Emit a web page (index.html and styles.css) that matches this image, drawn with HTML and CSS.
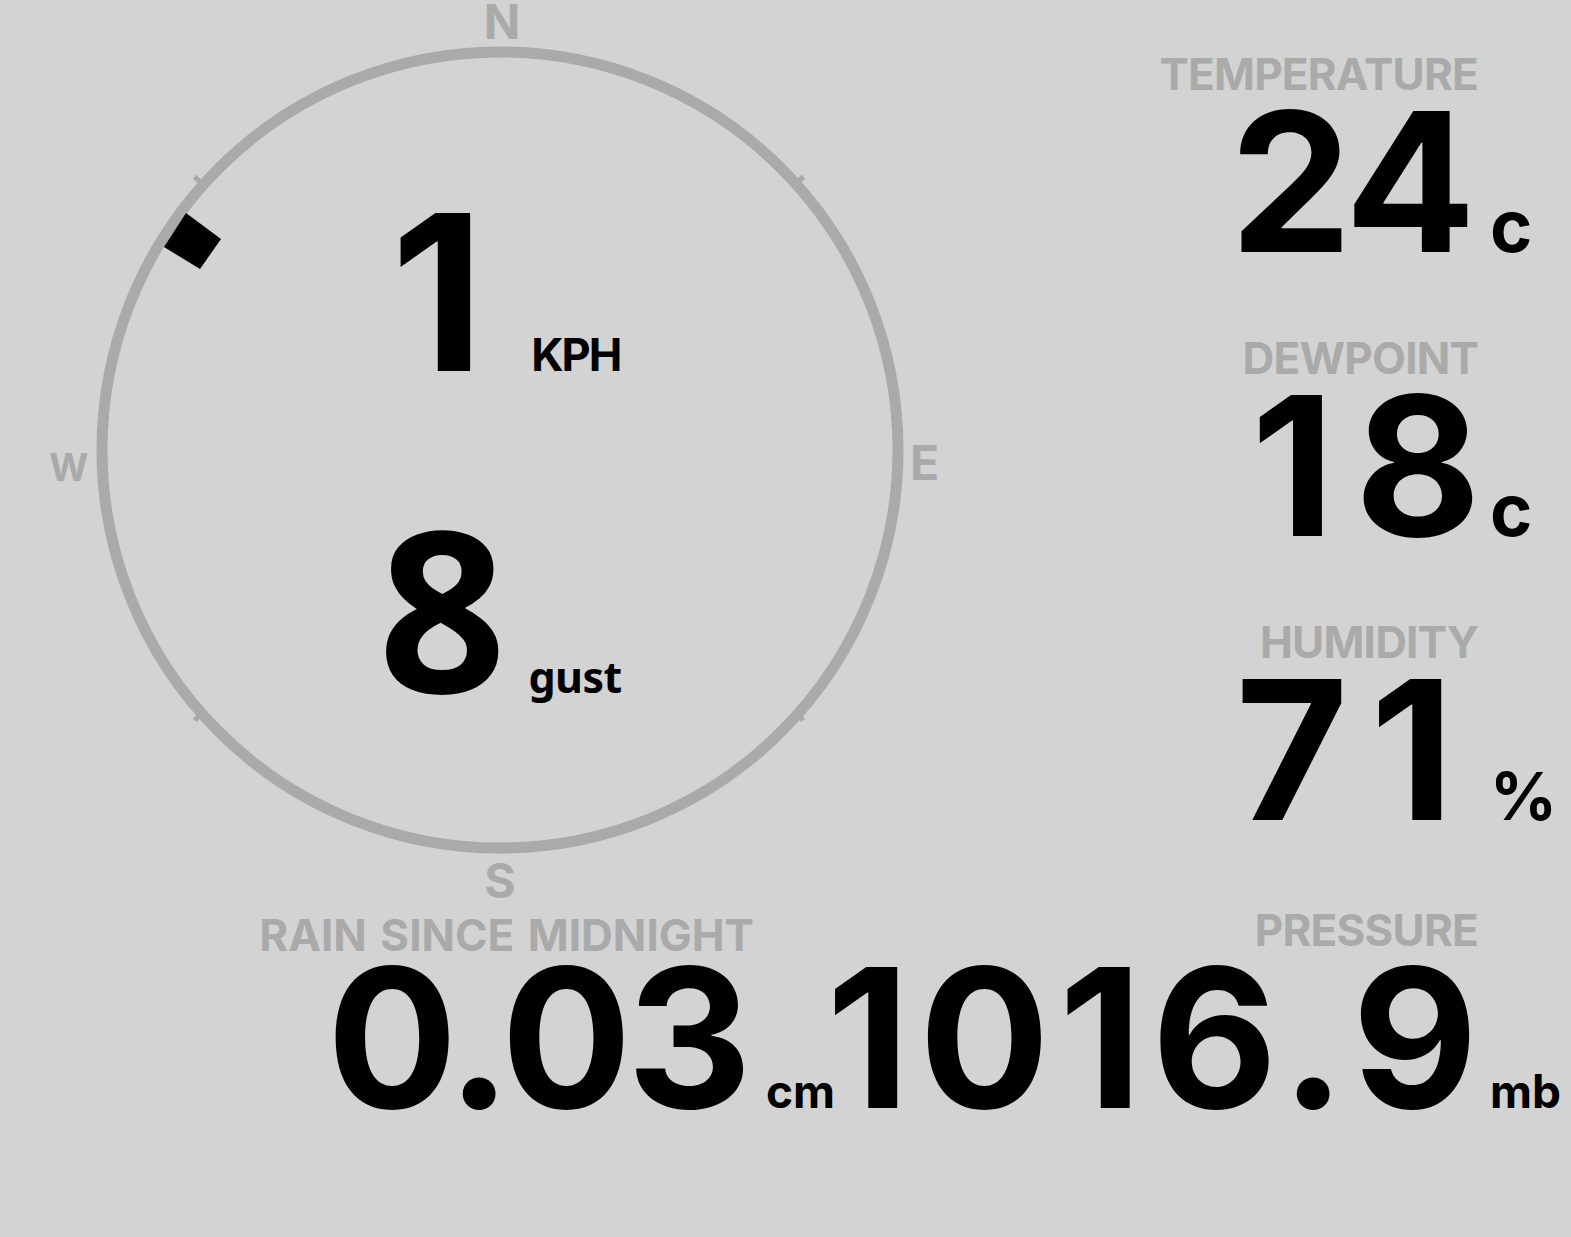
FILE: index.html
```html
<!DOCTYPE html>
<html lang="en">
<head>
<meta charset="utf-8">
<title>Weather</title>
<link rel="stylesheet" href="styles.css">
</head>
<body>
<main class="page">
  <section class="top">
    <div class="compass">
      <svg class="compass-ring" viewBox="0 0 1000 904" width="1000" height="904" aria-hidden="true">
        <circle cx="500" cy="450" r="398" fill="none" stroke="#aaaaaa" stroke-width="11"/>
        <g fill="#aaaaaa">
          <rect x="196" y="175" width="5" height="11" transform="rotate(-45 198.5 180.5)"/>
          <rect x="797" y="175" width="5" height="11" transform="rotate(45 799.5 180.5)"/>
          <rect x="196" y="711" width="5" height="11" transform="rotate(45 198.5 716.5)"/>
          <rect x="797" y="711" width="5" height="11" transform="rotate(-45 799.5 716.5)"/>
        </g>
        <polygon points="186,213 221,239 200,269 164,247" fill="#000000"/>
      </svg>
      <span class="cardinal cardinal-n">N</span>
      <span class="cardinal cardinal-e">E</span>
      <span class="cardinal cardinal-s">S</span>
      <span class="cardinal cardinal-w">W</span>
      <div class="speeds">
        <div class="speed-row wind-row">
          <span class="speed-num">1</span>
          <span class="speed-unit">KPH</span>
        </div>
        <div class="speed-row gust-row">
          <span class="gust-num">8</span>
          <span class="gust-unit">gust</span>
        </div>
      </div>
    </div>
    <div class="stats">
      <div class="stat stat-right">
        <div class="stat-label">TEMPERATURE</div>
        <div class="stat-num num-temp">24</div>
        <div class="stat-unit unit-c">c</div>
      </div>
      <div class="stat stat-right">
        <div class="stat-label">DEWPOINT</div>
        <div class="stat-num num-dew">18</div>
        <div class="stat-unit unit-c">c</div>
      </div>
      <div class="stat stat-right">
        <div class="stat-label">HUMIDITY</div>
        <div class="stat-num num-hum">71</div>
        <div class="stat-unit unit-pct">%</div>
      </div>
    </div>
  </section>
  <section class="bottom">
    <div class="stat stat-rain">
      <div class="stat-label label-rain">RAIN SINCE MIDNIGHT</div>
      <div class="stat-num num-rain">0.03</div>
      <div class="stat-unit unit-small">cm</div>
    </div>
    <div class="stat stat-pressure">
      <div class="stat-label">PRESSURE</div>
      <div class="stat-num num-pressure">1016.9</div>
      <div class="stat-unit unit-small">mb</div>
    </div>
  </section>
</main>
</body>
</html>
```
FILE: styles.css
```css
html, body {
  margin: 0;
  padding: 0;
  background: #d3d3d3;
}

.page {
  width: 1571px;
  height: 1237px;
  overflow: hidden;
  font-family: "Inter", "DejaVu Sans", sans-serif;
  font-weight: 700;
  color: #000;
}

.top {
  display: flex;
  height: 908px;
}

/* ---------- compass ---------- */
.compass {
  position: relative;
  width: 1000px;
  height: 908px;
  flex: none;
}

.compass-ring {
  position: absolute;
  left: 0;
  top: 0;
}

.cardinal {
  position: absolute;
  color: #aaaaaa;
  font-size: 48px;
  line-height: 44px;
}

.cardinal-n {
  left: 472px;
  width: 60px;
  text-align: center;
  top: 0;
}

.cardinal-s {
  left: 470px;
  width: 60px;
  text-align: center;
  top: 859px;
}

.cardinal-e {
  left: 910px;
  top: 441px;
}

.cardinal-w {
  left: 49px;
  top: 448px;
  font-size: 38px;
  line-height: 38px;
}

.speeds {
  position: relative;
  display: flex;
  flex-direction: column;
  align-items: center;
  padding-top: 207px;
  gap: 145px;
}

.speed-row {
  display: flex;
  align-items: baseline;
  justify-content: center;
  height: 170px;
}

.wind-row {
  padding-left: 26px;
  padding-right: 15px;
}

.speed-num {
  font-size: 217px;
  line-height: 170px;
}

.speed-unit {
  font-size: 45px;
  line-height: 40px;
  letter-spacing: -2px;
  margin-left: 47px;
}

.gust-row {
  font-family: "Noto Sans", "DejaVu Sans", sans-serif;
}

.gust-num {
  font-size: 224px;
  line-height: 170px;
}

.gust-unit {
  font-size: 43px;
  line-height: 40px;
  letter-spacing: -0.5px;
  margin-left: 22px;
}

/* ---------- stats ---------- */
.stats {
  flex: 1;
  display: flex;
  flex-direction: column;
  padding-top: 52px;
  gap: 79px;
}

.stat {
  display: grid;
  align-items: baseline;
}

.stat-right {
  grid-template-columns: 476px 95px;
}

.stat-label {
  grid-column: 1;
  justify-self: end;
  color: #aaaaaa;
  font-size: 44px;
  line-height: 44px;
  letter-spacing: -0.8px;
  margin-right: -2px;
  white-space: nowrap;
}

.label-rain {
  letter-spacing: 0;
  word-spacing: 3px;
  margin-right: -2px;
}

.stat-num {
  grid-column: 1;
  justify-self: end;
  font-size: 194px;
  line-height: 150px;
  margin-top: 11px;
  white-space: nowrap;
}

.num-temp {
  letter-spacing: -4px;
  margin-right: 4px;
}

.num-dew {
  letter-spacing: 20px;
  margin-right: -25px;
}

.num-hum {
  letter-spacing: 22px;
}

.num-rain {
  letter-spacing: -5px;
  margin-right: 5px;
}

.num-pressure {
  letter-spacing: 9px;
  margin-right: -11px;
}

.stat-unit {
  grid-column: 2;
  line-height: 40px;
  padding-left: 14px;
  white-space: nowrap;
}

.unit-c {
  font-size: 72px;
}

.unit-pct {
  font-size: 66px;
}

.unit-small {
  font-size: 46px;
}

/* ---------- bottom row ---------- */
.bottom {
  display: flex;
  align-items: flex-start;
}

.stat-rain {
  grid-template-columns: 752px 70px;
  padding-top: 5px;
}

.stat-rain .stat-num {
  margin-top: 6px;
}

.stat-rain .stat-unit {
  padding-left: 14px;
}

.stat-pressure {
  grid-template-columns: 654px 95px;
}
```
